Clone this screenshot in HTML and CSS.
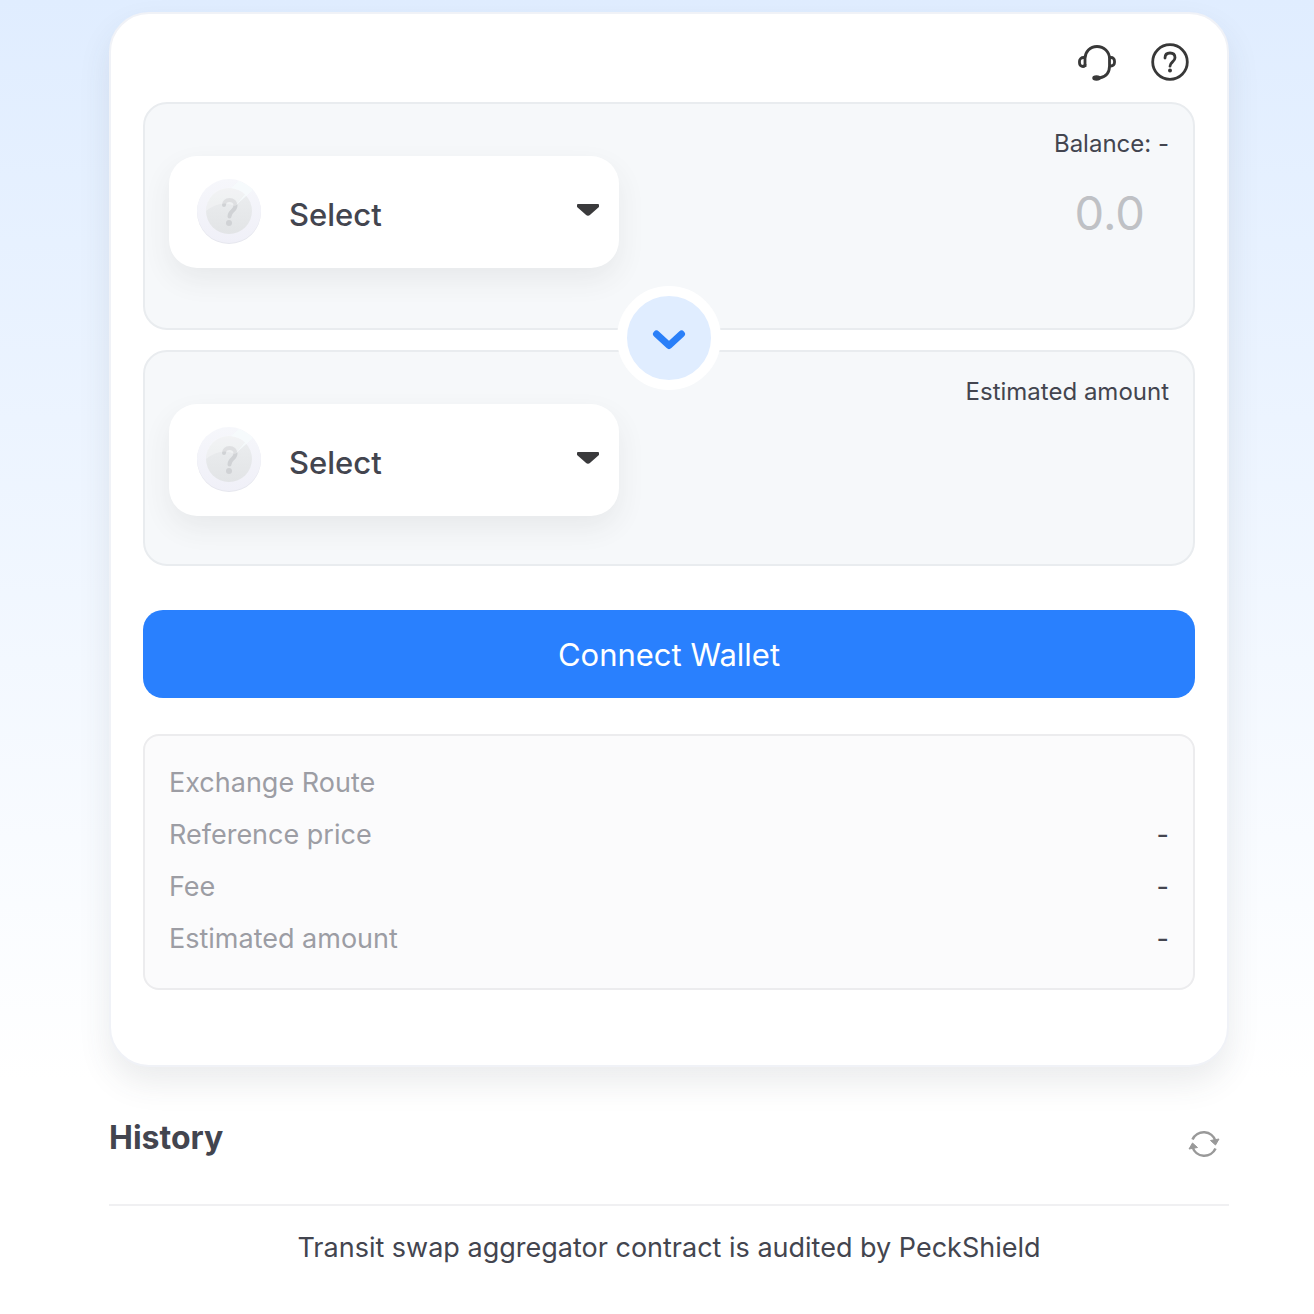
FILE: index.html
```html
<!DOCTYPE html>
<html lang="en">

<head>
    <meta charset="UTF-8">
    <meta name="viewport" content="width=device-width, initial-scale=1.0">
    <title>Transit Swap</title>
    <link rel="stylesheet" href="styles.css">
</head>

<body>
    <!-- shared drawings -->
    <svg class="defs" aria-hidden="true">
        <defs>
            <linearGradient id="coinFace" x1="0" y1="0" x2="0" y2="1">
                <stop offset="0" stop-color="#eceef0" />
                <stop offset="1" stop-color="#e2e4e6" />
            </linearGradient>
            <linearGradient id="coinRim" x1="0" y1="0" x2="0" y2="1">
                <stop offset="0" stop-color="#f6f7fb" />
                <stop offset="1" stop-color="#f0f0f8" />
            </linearGradient>
        </defs>
        <symbol id="coin" viewBox="0 0 64 66">
            <circle cx="32" cy="33" r="32" fill="#e6e7ee" />
            <circle cx="32" cy="32" r="32" fill="url(#coinRim)" />
            <circle cx="32" cy="32" r="23" fill="url(#coinFace)" />
            <path d="M27 26c0-3 2-5 5.500-5s6 2 6 5.500c0 5.500-6 5-6 11" fill="none" stroke="#d0d2d5" stroke-width="4" stroke-linecap="round" />
            <circle cx="32" cy="44" r="3" fill="#d0d2d5" />
            <path d="M9 32A23 23 0 0 1 48 15L38 27Q24 20 9 32z" fill="#fff" opacity=".3" />
            <path d="M38 27L56 11Q50 5 42 2L34 9Q42 10 48 15z" fill="#f6fbfd" opacity=".8" />
        </symbol>
        <symbol id="caret" viewBox="0 0 24 14">
            <path d="M2 2h20v1.500L13.500 11q-1.500 1.500-3 0L2 3.500z" fill="#3a3a3c" stroke="#3a3a3c" stroke-width="2" stroke-linejoin="round" />
        </symbol>
    </svg>

    <div class="w">
        <main class="card">
            <div class="tools">
                <button class="icon-btn" aria-label="Support">
                    <svg width="38" height="38" viewBox="0 0 38 38" fill="none" stroke="#383838" stroke-width="2.800">
                        <path d="M7 24V15.500C7 9 12 3.500 19 3.500S31.500 9 31.500 15.500V23c0 7-4 11-10 12" />
                        <path d="M7 14.500H5.500c-2 0-4 1.500-4 3.500v2c0 2 1.500 3.500 3.500 3.500s2-1 2-2.500" />
                        <path d="M31.500 14.500h1.500c2 0 3.500 1.500 3.500 3.500v1.500c0 2-1.500 3.500-3.500 3.500h-1.500" />
                        <ellipse cx="18.500" cy="35" rx="3.500" ry="2" fill="#383838" stroke-width="1.500" />
                    </svg>
                </button>
                <button class="icon-btn" aria-label="Help">
                    <svg width="38" height="38" viewBox="0 0 38 38" fill="none" stroke="#383838" stroke-width="2.800">
                        <circle cx="19" cy="19" r="17.300" />
                        <path d="M14 15c0-3.200 2-5 5-5s5 1.800 5 4.700c0 4-5 4.300-5 8.500" stroke-linecap="round" />
                        <circle cx="19" cy="27.500" r="2" fill="#383838" stroke="none" />
                    </svg>
                </button>
            </div>

            <section class="panel panel-from">
                <button class="token">
                    <svg class="coin"><use href="#coin" /></svg>
                    <span class="token-name">Select</span>
                    <svg class="caret"><use href="#caret" /></svg>
                </button>
                <div class="amount">
                    <label for="amount">Balance: -</label>
                    <input type="text" id="amount" placeholder="0.0" inputmode="decimal">
                </div>
            </section>

            <button class="switch" aria-label="Switch tokens">
                <svg width="34" height="22" viewBox="0 0 34 22" fill="none" stroke="#2a7ff8" stroke-width="7" stroke-linecap="round" stroke-linejoin="round">
                    <path d="M4.500 5L17 16.500 29.500 5" />
                </svg>
            </button>

            <section class="panel panel-to">
                <button class="token">
                    <svg class="coin"><use href="#coin" /></svg>
                    <span class="token-name">Select</span>
                    <svg class="caret"><use href="#caret" /></svg>
                </button>
                <div class="amount">
                    <p>Estimated amount</p>
                </div>
            </section>

            <button class="connect">Connect Wallet</button>

            <dl class="details">
                <div class="row">
                    <dt>Exchange Route</dt>
                    <dd></dd>
                </div>
                <div class="row">
                    <dt>Reference price</dt>
                    <dd>-</dd>
                </div>
                <div class="row">
                    <dt>Fee</dt>
                    <dd>-</dd>
                </div>
                <div class="row">
                    <dt>Estimated amount</dt>
                    <dd>-</dd>
                </div>
            </dl>
        </main>

        <div class="history">
            <h2>History</h2>
            <button class="icon-btn" aria-label="Refresh">
                <svg width="32" height="28" viewBox="0 0 32 28" fill="none" stroke="#999" stroke-width="2.600">
                    <path d="M4.500 9.500A12.300 12.300 0 0 1 27.500 11" />
                    <path d="M27.500 18.500A12.300 12.300 0 0 1 4.500 17" />
                    <path d="M22.500 10.500l8.500-1.500-3.500 6z" fill="#999" stroke="#999" stroke-width="1" />
                    <path d="M9.500 17.500L1 19l3.500-6z" fill="#999" stroke="#999" stroke-width="1" />
                </svg>
            </button>
        </div>

        <footer class="audit">Transit swap aggregator contract is audited by PeckShield</footer>
    </div>
</body>

</html>
```
FILE: styles.css
```css
* {
    margin: 0;
    padding: 0;
    box-sizing: border-box;
}

body {
    min-height: 100vh;
    background: #fff linear-gradient(#e0edff 0, #fff 1080px) no-repeat;
    color: #43454f;
    font-family: Inter, "Liberation Sans", sans-serif;
}

button {
    border: none;
    background: none;
    color: inherit;
    font-family: inherit;
    cursor: pointer;
}

svg {
    display: block;
}

.defs {
    position: absolute;
    width: 0;
    height: 0;
}

.w {
    padding: 12px 85px 40px 109px;
}

.card {
    padding: 29px 32px 75px;
    border: 2px solid #f0f2f7;
    border-radius: 40px;
    background: #fff;
    box-shadow: 0 16px 32px rgba(60, 65, 80, 0.1);
}

.tools {
    display: flex;
    justify-content: flex-end;
    gap: 35px;
    padding: 0 6px 21px;
}

.panel {
    display: flex;
    justify-content: space-between;
    padding: 24px;
    border: 2px solid #e9ecef;
    border-radius: 24px;
    background: #f6f8fa;
}

.panel-from {
    padding-bottom: 60px;
}

.panel-to {
    padding-bottom: 48px;
}

.token {
    display: flex;
    align-items: center;
    flex: 0 1 450px;
    height: 112px;
    margin-top: 28px;
    padding: 0 19px 0 28px;
    border-radius: 28px;
    background: #fff;
    box-shadow: 0 12px 28px rgba(60, 65, 70, 0.08);
}

.coin {
    width: 64px;
    height: 66px;
}

.token-name {
    flex: 1;
    padding: 6px 0 0 28px;
    font-size: 31px;
    font-weight: 500;
    line-height: 40px;
    text-align: left;
}

.caret {
    width: 24px;
    height: 14px;
    margin-bottom: 4px;
}

.amount {
    flex: 0 1 450px;
    font-size: 24px;
    line-height: 32px;
    text-align: right;
}

.amount label {
    display: block;
}

.amount input {
    width: 100%;
    height: 60px;
    margin-top: 22px;
    padding-right: 24px;
    border: none;
    outline: none;
    background: none;
    color: inherit;
    font: 400 47px Inter, "Liberation Sans", sans-serif;
    text-align: right;
}

.amount input::placeholder {
    color: #bfc1c5;
    opacity: 1;
}

.switch {
    display: flex;
    align-items: center;
    justify-content: center;
    position: relative;
    width: 104px;
    height: 104px;
    margin: -44px auto -40px;
    padding-top: 4px;
    border: 10px solid #fff;
    border-radius: 50%;
    background: #e0edff;
}

.connect {
    display: block;
    width: 100%;
    height: 88px;
    margin: 44px 0 36px;
    border-radius: 20px;
    background: #2980fe;
    color: #fff;
    font-size: 31px;
}

.details {
    padding: 21px 24px 23px;
    border: 2px solid #ececee;
    border-radius: 16px;
    background: #fbfbfc;
    font-size: 27px;
    line-height: 52px;
}

.row {
    display: flex;
    justify-content: space-between;
}

.row dt {
    color: #9c9da4;
}

.history {
    display: flex;
    align-items: center;
    justify-content: space-between;
    height: 139px;
    padding: 16px 9px 0 0;
    border-bottom: 2px solid #f0f0f2;
}

.history h2 {
    padding-bottom: 12px;
    font-size: 32px;
    font-weight: 700;
}

.audit {
    padding-top: 22px;
    font-size: 27px;
    line-height: 40px;
    text-align: center;
}
```
